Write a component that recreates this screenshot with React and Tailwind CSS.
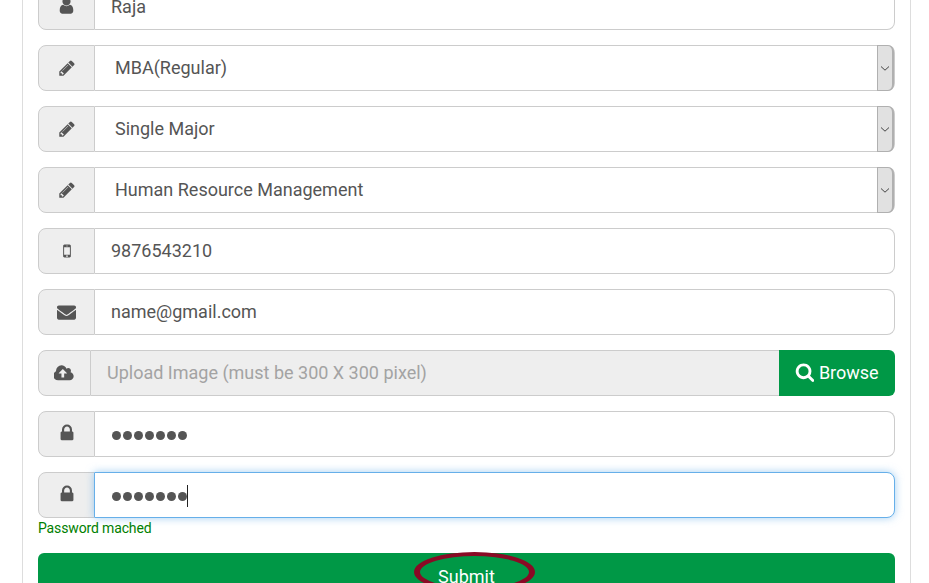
import React from "react";
import { FaEnvelope } from "react-icons/fa";

const Glyph = ({ d, w = 1792, size = 18 }) => (
  <svg width={(size * w) / 1792} height={size} viewBox={`0 0 ${w} 1792`} fill="currentColor">
    <path d={d} />
  </svg>
);

const USER = "M1536 1399q0 109-62.5 187t-150.5 78h-854q-88 0-150.5-78t-62.5-187q0-85 8.5-160.5t31.5-152 58.5-131 94-89 134.5-34.5q131 128 313 128t313-128q76 0 134.5 34.5t94 89 58.5 131 31.5 152 8.5 160.5zm-256-887q0 159-112.5 271.5t-271.5 112.5-271.5-112.5-112.5-271.5 112.5-271.5 271.5-112.5 271.5 112.5 112.5 271.5z";
const PENCIL = "M491 1536l91-91-235-235-91 91v107h128v128h107zm523-928q0-22-22-22-10 0-17 7l-542 542q-7 7-7 17 0 22 22 22 10 0 17-7l542-542q7-7 7-17zm-54-192l416 416-832 832h-416v-416zm683 96q0 53-37 90l-166 166-416-416 166-165q36-38 90-38 53 0 91 38l235 234q37 39 37 91z";
const MOBILE = "M976 1408q0-33-23.5-56.5t-56.5-23.5-56.5 23.5-23.5 56.5 23.5 56.5 56.5 23.5 56.5-23.5 23.5-56.5zm208-160v-704q0-13-9.5-22.5t-22.5-9.5h-512q-13 0-22.5 9.5t-9.5 22.5v704q0 13 9.5 22.5t22.5 9.5h512q13 0 22.5-9.5t9.5-22.5zm-192-848q0-16-16-16h-160q-16 0-16 16t16 16h160q16 0 16-16zm288-16v1024q0 52-38 90t-90 38h-512q-52 0-90-38t-38-90v-1024q0-52 38-90t90-38h512q52 0 90 38t38 90z";
const LOCK = "M640 768h512v-192q0-106-75-181t-181-75-181 75-75 181v192zm832 96v576q0 40-28 68t-68 28h-960q-40 0-68-28t-28-68v-576q0-40 28-68t68-28h32v-192q0-184 132-316t316-132 316 132 132 316v192h32q40 0 68 28t28 68z";
const CLOUD = "M1216 864q0-14-9-23l-352-352q-9-9-23-9t-23 9l-351 351q-10 12-10 24 0 14 9 23t23 9h224v352q0 13 9.5 22.5t22.5 9.5h192q13 0 22.5-9.5t9.5-22.5v-352h224q13 0 22.5-9.5t9.5-22.5zm640 288q0 159-112.5 271.5t-271.5 112.5h-1088q-185 0-316.5-131.5t-131.5-316.5q0-130 70-240t188-165q-2-30-2-43 0-212 150-362t362-150q156 0 285.5 87t188.5 231q71-62 166-62 106 0 181 75t75 181q0 76-41 138 130 31 213.5 135.5t83.5 238.5z";
const SEARCH = "M1216 832q0-185-131.5-316.5t-316.5-131.5-316.5 131.5-131.5 316.5 131.5 316.5 316.5 131.5 316.5-131.5 131.5-316.5zm512 832q0 52-38 90t-90 38q-54 0-90-38l-343-342q-179 124-399 124-143 0-273.5-55.5t-225-150-150-225-55.5-273.5 55.5-273.5 150-225 225-150 273.5-55.5 273.5 55.5 225 150 150 225 55.5 273.5q0 220-124 399l343 343q37 37 37 90z";

const Addon = ({ children, w = "w-[57px]" }) => (
  <div className={`${w} shrink-0 flex items-center justify-center bg-[#eeeeee] border border-[#cccccc] rounded-l-[8px] text-[#555555]`}>
    {children}
  </div>
);

const Row = ({ icon, text, dots, select, focus }) => (
  <div className="flex h-[46px]">
    <Addon>{icon}</Addon>
    <div
      className={`relative flex-1 min-w-0 flex items-center bg-white rounded-r-[8px] text-[18px] text-[#555555] border ${
        focus
          ? "ml-[-1px] border-[#66afe9] rounded-l-[1px] shadow-[0_0_8px_rgba(102,175,233,0.6)]"
          : "border-[#cccccc] border-l-0"
      } ${select ? "pl-[20px]" : "pl-[16px]"}`}
    >
      {dots ? (
        <span className="flex items-center gap-[2px] pt-[2px] pl-[1px]">
          {Array.from({ length: 7 }).map((_, i) => (
            <span key={i} className="w-[9px] h-[9px] rounded-full bg-[#555555]" />
          ))}
          {focus && <span className="w-[1px] h-[22px] bg-[#222222] ml-[-2px]" />}
        </span>
      ) : (
        <span className="pb-[2px]">{text}</span>
      )}
      {select && (
        <span className="absolute right-0 top-[-1px] bottom-[-1px] w-[17px] flex items-center justify-center bg-[#e1e1e1] border border-[#b0b0b0] border-r-2 rounded-r-[6px]">
          <svg width="10" height="7" viewBox="0 0 10 7" fill="none" stroke="#444444" strokeWidth="1">
            <path d="M1 1.5 L5 5.2 L9 1.5" />
          </svg>
        </span>
      )}
    </div>
  </div>
);

export default function App() {
  return (
    <div className="h-[583px] w-[929px] overflow-hidden bg-white" style={{ fontFamily: "Roboto, sans-serif" }}>
      <div className="ml-[22px] w-[889px] h-[640px] mt-[-16px] border-x border-[#dddddd] pl-[15px] pr-[15px]">
        <div className="flex flex-col gap-[15px]">
          <Row icon={<span className="pb-[3px]"><Glyph d={USER} size={19} /></span>} text="Raja" />
          <Row select icon={<Glyph d={PENCIL} />} text="MBA(Regular)" />
          <Row select icon={<Glyph d={PENCIL} />} text="Single Major" />
          <Row select icon={<Glyph d={PENCIL} />} text="Human Resource Management" />
          <Row icon={<Glyph d={MOBILE} />} text="9876543210" />
          <Row icon={<FaEnvelope size={19} />} text="name@gmail.com" />
          <div className="flex h-[46px]">
            <Addon w="w-[53px]"><Glyph d={CLOUD} w={1920} size={19} /></Addon>
            <div className="flex-1 flex items-center pl-[16px] pb-[2px] bg-[#eeeeee] border-y border-[#cccccc] text-[18px] text-[#a3a3a3]">
              Upload Image (must be 300 X 300 pixel)
            </div>
            <div className="w-[116px] flex items-center justify-center gap-[5px] pb-[2px] bg-[#009846] rounded-r-[6px] text-white text-[18px]">
              <Glyph d={SEARCH} w={1664} size={20} />
              <span>Browse</span>
            </div>
          </div>
          <Row icon={<span className="pb-[2px]"><Glyph d={LOCK} size={20} /></span>} dots />
          <div>
            <Row focus icon={<span className="pb-[2px]"><Glyph d={LOCK} size={20} /></span>} dots />
            <div className="text-[14px] leading-[20px] tracking-[-0.01em] text-[#008000]">Password mached</div>
          </div>
        </div>
        <div className="relative mt-[15px] h-[60px] bg-[#009846] rounded-t-[6px] flex justify-center text-white text-[18px] pt-[10px]">
          <span>Submit</span>
          <span className="absolute left-1/2 top-[-1px] ml-[-52.5px] w-[121px] h-[40px] rounded-[50%] border-x-[6px] border-y-[4px] border-[#8a0a25]" />
        </div>
      </div>
    </div>
  );
}
